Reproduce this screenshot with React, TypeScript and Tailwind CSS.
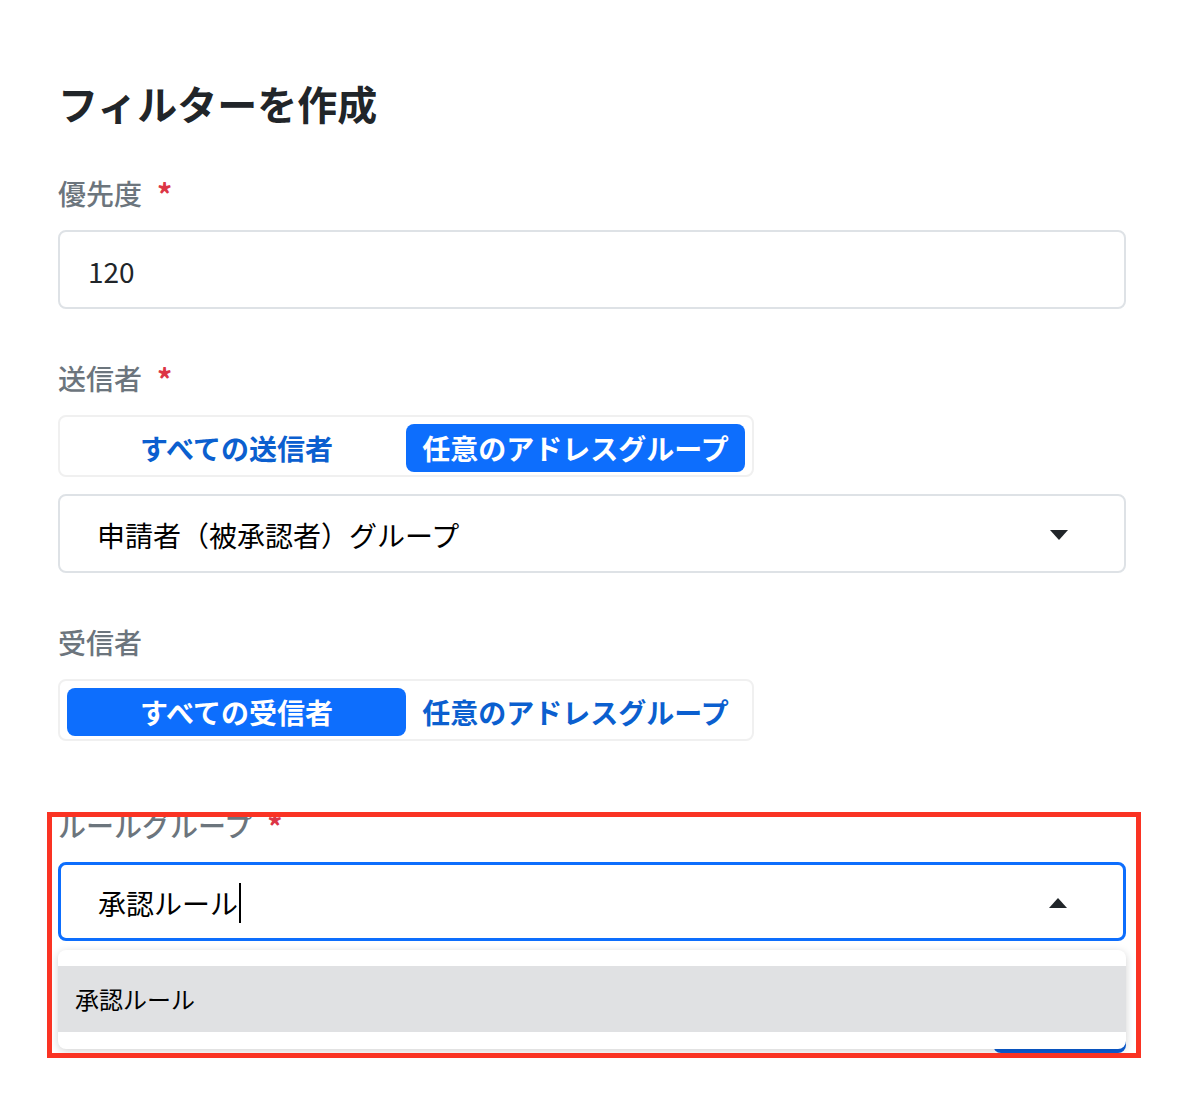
import React from "react";

const blue = "bg-[#0d6efd]";

function FieldLabel({ text, required }: { text: string; required?: boolean }) {
  return (
    <div className="flex h-[42px] items-center text-[28px] leading-[42px] font-medium text-[#6c757d]">
      <span>{text}</span>
      {required && <span className="ml-[15px] text-[30px] font-bold text-[#dc3545]">*</span>}
    </div>
  );
}

function Caret({ up }: { up?: boolean }) {
  return (
    <svg width="18" height="10" viewBox="0 0 18 10" className="shrink-0">
      {up ? <path d="M9 0L18 10H0Z" fill="#212529" /> : <path d="M0 0H18L9 10Z" fill="#212529" />}
    </svg>
  );
}

interface ToggleProps {
  options: string[];
  active: number;
}

function Toggle({ options, active }: ToggleProps) {
  return (
    <div className="flex w-[696px] rounded-lg border-2 border-[#f0f0f0] px-[7px] pt-[7px] pb-[3px]">
      {options.map((opt, i) =>
        i === active ? (
          <div
            key={opt}
            className={`flex h-[48px] w-[339px] items-center justify-center rounded-lg ${blue} text-[28px] font-bold text-white`}
          >
            {opt}
          </div>
        ) : (
          <div
            key={opt}
            className="flex h-[48px] w-[339px] items-center justify-center rounded-lg text-[28px] font-bold text-[#0b5fcf]"
          >
            {opt}
          </div>
        )
      )}
    </div>
  );
}

export default function App() {
  return (
    <div className="min-h-screen bg-white px-[58px] pt-[79px] font-['Noto_Sans_CJK_JP','Noto_Sans',sans-serif]">
      <h1 className="text-[40px] leading-[48px] font-bold text-[#212529]">フィルターを作成</h1>

      {/* 優先度 */}
      <div className="mt-[45px]">
        <FieldLabel text="優先度" required />
        <div className="mt-[16px] flex h-[79px] items-center rounded-lg border-2 border-[#dee2e6] pt-[2px] pl-[28px] text-[28px] text-[#212529]">
          120
        </div>
      </div>

      {/* 送信者 */}
      <div className="mt-[48px]">
        <FieldLabel text="送信者" required />
        <div className="mt-[16px]">
          <Toggle options={["すべての送信者", "任意のアドレスグループ"]} active={1} />
        </div>
        <div className="mt-[17px] flex h-[79px] items-center justify-between rounded-lg border-2 border-[#dee2e6] pt-[2px] pr-[56px] pl-[37px] text-[28px] text-black">
          <span>申請者（被承認者）グループ</span>
          <Caret />
        </div>
      </div>

      {/* 受信者 */}
      <div className="mt-[48px]">
        <FieldLabel text="受信者" />
        <div className="mt-[16px]">
          <Toggle options={["すべての受信者", "任意のアドレスグループ"]} active={0} />
        </div>
      </div>

      {/* ルールグループ */}
      <div className="relative mt-[63px]">
        <FieldLabel text="ルールグループ" required />
        <div className="relative mt-[16px]">
          <div className="flex h-[79px] items-center justify-between rounded-lg border-[3px] border-[#0d6efd] pt-[2px] pr-[56px] pl-[37px] text-[28px] text-black">
            <span className="flex items-center">
              承認ルール
              <span className="ml-[1px] inline-block h-[40px] w-[2px] bg-black" />
            </span>
            <Caret up />
          </div>
          <div className="absolute top-[calc(100%+9px)] right-0 left-0 z-10 rounded-lg bg-white pt-[16px] pb-[17px] shadow-[0_2px_8px_rgba(0,0,0,0.18)]">
            <div className="flex h-[66px] items-center bg-[#e0e1e3] pl-[17px] text-[24px] text-black">承認ルール</div>
          </div>
        </div>
        <div className="mt-[64px] flex justify-end">
          <button className="h-[48px] w-[133px] rounded-lg bg-[#0b5ed7] text-[24px] font-bold text-white">作成</button>
        </div>
        <div className="pointer-events-none absolute top-[8px] right-[-15px] left-[-11px] z-20 h-[246px] border-[5px] border-[#fa3323]" />
      </div>
    </div>
  );
}
